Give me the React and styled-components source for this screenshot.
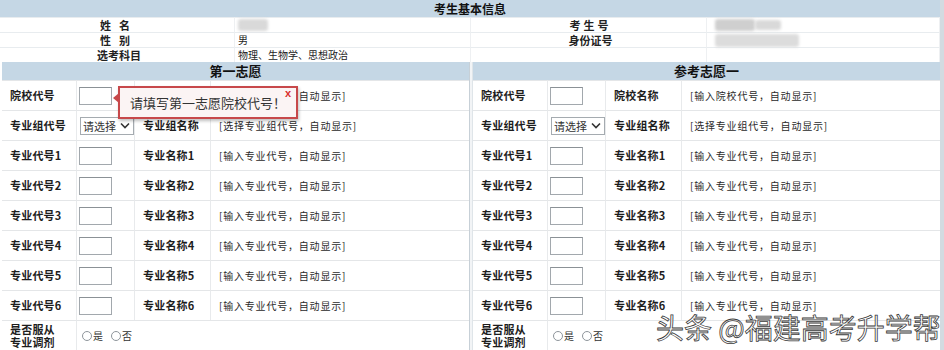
import styled, { createGlobalStyle } from "styled-components";

const GlobalStyle = createGlobalStyle`
  body {
    margin: 0;
    background: #fff;
    font-family: "Noto Sans CJK SC", "Liberation Sans", sans-serif;
    color: #222;
  }
`;

const Frame = styled.div`
  position: relative;
  width: 944px;
  height: 350px;
  overflow: hidden;
  box-sizing: border-box;
  border-right: 4px solid #d3dbe1;
  background: #fff;
`;

/* 考生基本信息 */
const InfoTable = styled.div`
  display: grid;
  grid-template-columns: 235px 236px 236px 1fr;
`;

const Band = styled.div`
  grid-column: 1 / -1;
  height: ${(p) => p.$h || 17}px;
  line-height: ${(p) => p.$h || 17}px;
  background: #c5d7e5;
  text-align: center;
  font-size: ${(p) => p.$size || 12}px;
  font-weight: 700;
  color: #111;
`;

const InfoLabel = styled.div`
  height: 14px;
  line-height: 14px;
  border-top: 1px solid #e8ecef;
  border-right: 1px solid #eef0f2;
  text-align: center;
  font-size: 11px;
  font-weight: 700;
  letter-spacing: ${(p) => p.$spread || 0}px;
  padding-left: 4px;
`;

const InfoValue = styled.div`
  height: 14px;
  line-height: 14px;
  border-top: 1px solid #e8ecef;
  border-right: 1px solid #eef0f2;
  padding-left: ${(p) => p.$pad || 3}px;
  font-size: 10px;
  display: flex;
  align-items: center;
`;

const Blur = styled.span`
  display: inline-block;
  width: ${(p) => p.$w}px;
  height: ${(p) => p.$h || 12}px;
  background: ${(p) => p.$c || "#d9d9d9"};
  border-radius: 3px;
  filter: blur(1.5px);
`;

/* 志愿面板 */
const Panels = styled.div`
  display: flex;
  padding-left: 2px;
`;

const Divider = styled.div`
  width: 2px;
  border-left: 1px solid #c7d0d7;
  border-right: 1px solid #dfe5e9;
  background: #f2f4f6;
`;

const Panel = styled.div`
  position: relative;
  flex: 1;
  display: grid;
  grid-template-columns: 75px 58px 76px 1fr;
  grid-auto-rows: 30px;
  grid-template-rows: 18px;
`;

const Cell = styled.div`
  display: flex;
  align-items: center;
  border-top: 1px solid #e4e6e8;
  border-right: ${(p) => (p.$last ? "none" : "1px solid #e8eaec")};
  padding-left: ${(p) => p.$pad ?? 8}px;
  box-sizing: border-box;
  grid-column: ${(p) => p.$span || "auto"};
`;

const Label = styled.span`
  font-size: 11px;
  font-weight: 700;
  color: #1d1d1d;
  line-height: 13px;
  letter-spacing: 0.2px;
`;

const Hint = styled.span`
  font-size: 10px;
  color: #2a2a2a;
  letter-spacing: 0.8px;
  white-space: nowrap;
`;

const CodeInput = styled.div`
  width: 33px;
  height: 18px;
  box-sizing: border-box;
  border: 1px solid #a2a8ad;
  border-top-color: #8b9196;
  background: #fff;
`;

const Select = styled.div`
  width: 54px;
  height: 18px;
  box-sizing: border-box;
  border: 1px solid #a5abb0;
  display: flex;
  align-items: center;
  justify-content: space-between;
  padding: 0 3px 0 2px;
  font-size: 11px;
  color: #333;
`;

const Radios = styled.div`
  display: flex;
  align-items: center;
  gap: 8px;
  font-size: 10px;
  color: #333;
`;

const Radio = styled.span`
  display: inline-flex;
  align-items: center;
  gap: 1px;

  &::before {
    content: "";
    width: 10px;
    height: 10px;
    border-radius: 50%;
    border: 1px solid #8e959b;
    box-sizing: border-box;
    background: #fff;
  }
`;

/* 提示框 */
const Tip = styled.div`
  position: absolute;
  left: 116px;
  top: 24px;
  width: 180px;
  height: 33px;
  box-sizing: border-box;
  border: 2px solid #c7484a;
  background: #fbf4f4;
  box-shadow: 1px 2px 3px rgba(0, 0, 0, 0.25);
  display: flex;
  align-items: center;
  padding-left: 10px;
  font-size: 13px;
  color: #333;
  z-index: 2;

  &::before {
    content: "";
    position: absolute;
    left: -7px;
    top: 5px;
    border-style: solid;
    border-width: 5px 6px 5px 0;
    border-color: transparent #c7484a transparent transparent;
  }
`;

const Close = styled.span`
  position: absolute;
  right: 5px;
  top: -1px;
  font-size: 11px;
  font-weight: 700;
  color: #d9302c;
  font-family: "Liberation Sans", sans-serif;
`;

const Watermark = styled.div`
  position: absolute;
  left: 656px;
  top: 310px;
  font-size: 28px;
  line-height: 34px;
  color: #fff;
  white-space: nowrap;
  letter-spacing: 0;
  -webkit-text-stroke: 0.8px #3a3a3a;
  z-index: 3;
`;

const Chevron = () => (
  <svg width="10" height="7" viewBox="0 0 10 7">
    <path d="M1 1.5 L5 5.5 L9 1.5" fill="none" stroke="#333" strokeWidth="1.6" />
  </svg>
);

const majorRows = [1, 2, 3, 4, 5, 6];

function Choice({ title, tip }) {
  return (
    <Panel>
      <Band $h={18} $size={13}>{title}</Band>

      <Cell><Label>院校代号</Label></Cell>
      <Cell $pad={2}><CodeInput /></Cell>
      <Cell><Label>院校名称</Label></Cell>
      <Cell $last><Hint>[输入院校代号，自动显示]</Hint></Cell>

      <Cell><Label>专业组代号</Label></Cell>
      <Cell $pad={3}><Select>请选择<Chevron /></Select></Cell>
      <Cell><Label>专业组名称</Label></Cell>
      <Cell $last><Hint>[选择专业组代号，自动显示]</Hint></Cell>

      {majorRows.map((n) => [
        <Cell key={`a${n}`}><Label>专业代号{n}</Label></Cell>,
        <Cell key={`b${n}`} $pad={2}><CodeInput /></Cell>,
        <Cell key={`c${n}`}><Label>专业名称{n}</Label></Cell>,
        <Cell key={`d${n}`} $last><Hint>[输入专业代号，自动显示]</Hint></Cell>,
      ])}

      <Cell><Label>是否服从<br />专业调剂</Label></Cell>
      <Cell $span="2 / -1" $pad={5} $last>
        <Radios>
          <Radio>是</Radio>
          <Radio>否</Radio>
        </Radios>
      </Cell>

      {tip && (
        <Tip>
          请填写第一志愿院校代号！
          <Close>x</Close>
        </Tip>
      )}
    </Panel>
  );
}

export default function App() {
  return (
    <>
      <GlobalStyle />
      <Frame>
        <InfoTable>
          <Band>考生基本信息</Band>
          <InfoLabel $spread={8}>姓名</InfoLabel>
          <InfoValue><Blur $w={30} /></InfoValue>
          <InfoLabel $spread={3}>考生号</InfoLabel>
          <InfoValue $pad={8}><Blur $w={40} $c="#cfcfcf" /><Blur $w={26} $h={10} /></InfoValue>

          <InfoLabel $spread={8}>性别</InfoLabel>
          <InfoValue>男</InfoValue>
          <InfoLabel>身份证号</InfoLabel>
          <InfoValue $pad={8}><Blur $w={84} $h={13} $c="#dcdcdc" /></InfoValue>

          <InfoLabel>选考科目</InfoLabel>
          <InfoValue>物理、生物学、思想政治</InfoValue>
          <InfoLabel />
          <InfoValue />
        </InfoTable>

        <Panels>
          <Choice title="第一志愿" tip />
          <Divider />
          <Choice title="参考志愿一" />
        </Panels>

        <Watermark>头条 @福建高考升学帮</Watermark>
      </Frame>
    </>
  );
}
